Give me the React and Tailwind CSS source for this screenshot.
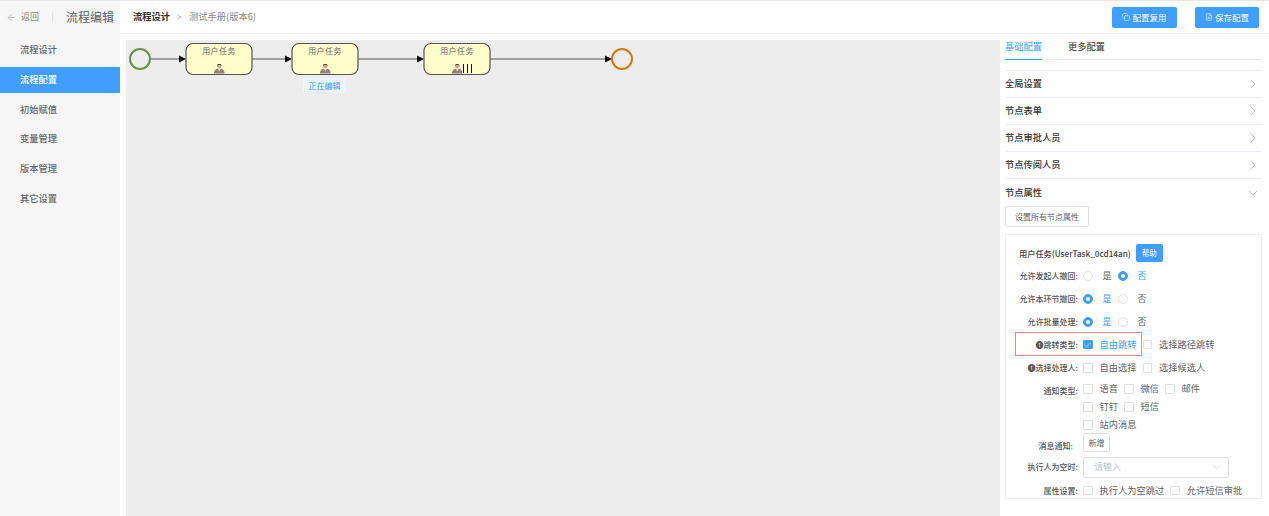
import React from "react";
import { ArrowLeft, ChevronRight, ChevronDown, Copy, FileText, Check } from "lucide-react";

const font = { fontFamily: '"Noto Sans CJK SC", "Noto Sans", sans-serif' };

function Person({ x, y }) {
  return (
    <g transform={`translate(${x} ${y}) scale(0.88)`}>
      <path d="M0 12 C0 8 2 7 4 6.5 L8 6.5 C10 7 12 8 12 12 Z" fill="#8c8078" />
      <path d="M4.6 6.5 L6 10 L7.4 6.5 Z" fill="#f3e6dc" />
      <circle cx="6" cy="3.4" r="2.6" fill="#d8a58c" />
      <path d="M3.3 3.2 C3.3 0.4 8.7 0.4 8.7 3.2 C7.6 1.9 4.4 1.9 3.3 3.2 Z" fill="#5a3f34" />
    </g>
  );
}

function Task({ x, multi }) {
  return (
    <g>
      <rect x={x} y="3.5" width="66" height="31" rx="7" fill="#ffffcc" stroke="#555" strokeWidth="1.2" />
      <text x={x + 33} y="14" textAnchor="middle" fontSize="8" letterSpacing="0.4" fill="#666">用户任务</text>
      <Person x={multi ? x + 28 : x + 28} y={23} />
      {multi && <path d={`M${x + 39.5} 24 V33 M${x + 43.5} 24 V33 M${x + 47.5} 24 V33`} stroke="#111" strokeWidth="1" />}
    </g>
  );
}

function Flow({ x1, x2 }) {
  return (
    <g>
      <line x1={x1} y1="19" x2={x2 - 6} y2="19" stroke="#555" strokeWidth="1" />
      <path d={`M${x2 - 7} 15.5 L${x2} 19 L${x2 - 7} 22.5 Z`} fill="#111" />
    </g>
  );
}

function Diagram() {
  return (
    <svg className="block" width="874" height="100" style={font}>
      <circle cx="14" cy="19" r="10" fill="none" stroke="#6b9045" strokeWidth="2" />
      <Flow x1={25} x2={60} />
      <Task x={60} />
      <Flow x1={126} x2={166} />
      <Task x={166} />
      <Flow x1={232} x2={298} />
      <Task x={298} multi />
      <Flow x1={364} x2={486} />
      <circle cx="496" cy="19" r="10" fill="none" stroke="#d97706" strokeWidth="2" />
    </svg>
  );
}

const sideItems = ["流程设计", "流程配置", "初始赋值", "变量管理", "版本管理", "其它设置"];

function Radio({ on, label }) {
  return (
    <span className="flex items-center">
      <span className={`w-[10px] h-[10px] rounded-full border flex items-center justify-center ${on ? "bg-[#409eff] border-[#409eff]" : "bg-white border-[#dcdfe6]"}`}>
        {on && <span className="w-[4px] h-[4px] rounded-full bg-white" />}
      </span>
      <span className={`ml-[9.5px] mr-[6.5px] text-[9px] ${on ? "text-[#409eff]" : "text-[#606266]"}`}>{label}</span>
    </span>
  );
}

function Box({ on, label, gap = "mr-[6px]" }) {
  return (
    <span className={`flex items-center ${gap}`}>
      <span className={`w-[9.5px] h-[9.5px] rounded-[1px] border flex items-center justify-center ${on ? "bg-[#409eff] border-[#409eff]" : "bg-white border-[#dcdfe6]"}`}>
        {on && <Check size={8} color="#fff" strokeWidth={2} />}
      </span>
      <span className={`ml-[7px] text-[9.25px] whitespace-nowrap ${on ? "text-[#409eff]" : "text-[#606266]"}`}>{label}</span>
    </span>
  );
}

function Row({ h, label, children, labelClass = "" }) {
  return (
    <div className={`flex items-center ${h}`}>
      <div className={`w-[72px] text-right text-[8px] font-medium text-[#55575c] whitespace-nowrap shrink-0 ${labelClass}`}>{label}</div>
      <div className="flex items-center ml-[5px]">{children}</div>
    </div>
  );
}

function Acc({ label, open }) {
  return (
    <div className={`flex items-center justify-between h-[27px] ${open ? "" : "border-b border-[#ebeef5]"}`}>
      <span className="text-[9.25px] font-medium text-[#303133]">{label}</span>
      {open ? <ChevronDown size={16} color="#909399" strokeWidth={0.9} className="mr-[1.5px]" /> : <ChevronRight size={16} color="#909399" strokeWidth={0.9} className="mr-[1.5px]" />}
    </div>
  );
}

export default function App() {
  return (
    <div className="w-[1269px] h-[516px] overflow-hidden bg-white flex flex-col" style={font}>
      <div className="h-[1px] bg-[#e6e6e6] shrink-0" />
      <div className="flex flex-1 min-h-0">
        <aside className="w-[120px] shrink-0 bg-[#f6f6f6] flex flex-col">
          <div className="h-[32px] flex items-center pl-[6px] shrink-0">
            <ArrowLeft size={11} color="#999" strokeWidth={1.25} />
            <span className="ml-[4px] text-[9px] text-[#8a8a8a]">返回</span>
            <span className="ml-[13px] w-px h-[10px] bg-[#e4e4e4]" />
            <span className="ml-[13px] text-[12px] text-[#606266] whitespace-nowrap">流程编辑</span>
          </div>
          <nav className="flex flex-col gap-[3px] pt-[4px]">
            {sideItems.map((t, i) => (
              <div key={t} className={`h-[26.7px] flex items-center pl-[20px] text-[9.25px] font-medium ${i === 1 ? "bg-[#409eff] text-white" : "text-[#666]"}`}>{t}</div>
            ))}
          </nav>
        </aside>
        <main className="flex-1 min-w-0 flex flex-col">
          <header className="h-[33px] shrink-0 border-b border-[#eeeeee] flex items-center pl-[13px] pr-[10px]">
            <span className="text-[9.25px] font-bold text-[#303133]">流程设计</span>
            <span className="ml-[7px] text-[9px] text-[#aaa]">&gt;</span>
            <span className="ml-[7px] text-[9.25px] text-[#888]">测试手册(版本6)</span>
            <div className="ml-auto flex items-center gap-[18px]">
              <button className="w-[65px] h-[21px] rounded-[2px] bg-[#409eff] text-white text-[8.5px] flex items-center justify-center gap-[2px]">
                <Copy size={8} strokeWidth={1.5} />配置复用
              </button>
              <button className="w-[64px] h-[21px] rounded-[2px] bg-[#409eff] text-white text-[8.5px] flex items-center justify-center gap-[2px]">
                <FileText size={8} strokeWidth={1.5} />保存配置
              </button>
            </div>
          </header>
          <div className="flex flex-1 min-h-0">
            <section className="relative w-[874px] ml-[6px] mt-[6px] bg-[#ededed] shrink-0">
              <Diagram />
              <span className="absolute left-[177px] top-[38px] w-[43px] h-[15px] rounded-[2px] bg-[#ecf5ff] text-[#409eff] text-[8px] flex items-center justify-center">正在编辑</span>
            </section>
            <section className="flex-1 min-w-0 pl-[5px] pr-[7px]">
              <div className="flex h-[26px] border-b border-[#e4e7ed] items-start pt-[6px] relative">
                <span className="text-[9.25px] text-[#409eff]">基础配置</span>
                <span className="ml-[26px] text-[9.25px] text-[#303133]">更多配置</span>
                <span className="absolute left-0 bottom-[-1px] w-[37px] h-[1px] bg-[#409eff]" />
              </div>
              <div className="mt-[10px] border-t border-[#ebeef5]">
                <Acc label="全局设置" />
                <Acc label="节点表单" />
                <Acc label="节点审批人员" />
                <Acc label="节点传阅人员" />
                <Acc label="节点属性" open />
              </div>
              <button className="block w-[84px] h-[21px] border border-[#dcdfe6] rounded-[2px] text-[8px] text-[#606266] bg-white">设置所有节点属性</button>
              <div className="relative mt-[7px] h-[265px] border border-[#ebeef5] pt-[9px]">
                <div className="flex items-center h-[18px] pl-[13px]">
                  <span className="text-[8.2px] font-medium text-[#404246] whitespace-nowrap">用户任务(UserTask_0cd14an)</span>
                  <button className="ml-[5px] w-[27px] h-[18px] rounded-[2px] bg-[#409eff] text-white text-[7.5px]">帮助</button>
                </div>
                <div className="mt-[3px]">
                  <Row h="h-[22px]" label="允许发起人撤回:"><Radio label="是" /><Radio on label="否" /></Row>
                  <Row h="h-[23px]" label="允许本环节撤回:"><Radio on label="是" /><Radio label="否" /></Row>
                  <Row h="h-[23px]" label="允许批量处理:"><Radio on label="是" /><Radio label="否" /></Row>
                  <Row h="h-[23px]" label="❶跳转类型:"><Box on label="自由跳转" /><Box label="选择路径跳转" /></Row>
                  <Row h="h-[24px]" label="❶选择处理人:"><Box label="自由选择" /><Box label="选择候选人" /></Row>
                  <Row h="h-[18px]" label="通知类型:" labelClass="pt-[3px]"><Box label="语音" /><Box label="微信" /><Box label="邮件" /></Row>
                  <Row h="h-[18px]" label=""><Box label="钉钉" /><Box label="短信" /></Row>
                  <Row h="h-[18px]" label=""><Box label="站内消息" /></Row>
                  <div className="flex items-end h-[18px] relative">
                    <div className="w-[67px] text-right text-[8px] font-medium text-[#55575c] shrink-0">消息通知:</div>
                    <button className="ml-[10px] w-[27px] h-[19px] border border-[#dcdfe6] rounded-[2px] text-[8px] text-[#606266] bg-white">新增</button>
                  </div>
                  <Row h="h-[29px]" label="执行人为空时:">
                    <div className="w-[146px] h-[21px] border border-[#dcdfe6] rounded-[3px] flex items-center justify-between pl-[10px] pr-[4px] mt-[1px]">
                      <span className="text-[9px] text-[#c0c4cc]">请输入</span>
                      <ChevronDown size={14} color="#c0c4cc" strokeWidth={1} />
                    </div>
                  </Row>
                  <Row h="h-[19px]" label="属性设置:"><Box label="执行人为空跳过" /><Box label="允许短信审批" /></Row>
                </div>
                <div className="absolute left-[9px] top-[97px] w-[127px] h-[24px] border border-[#f08a8a] pointer-events-none" />
              </div>
            </section>
          </div>
        </main>
      </div>
    </div>
  );
}
